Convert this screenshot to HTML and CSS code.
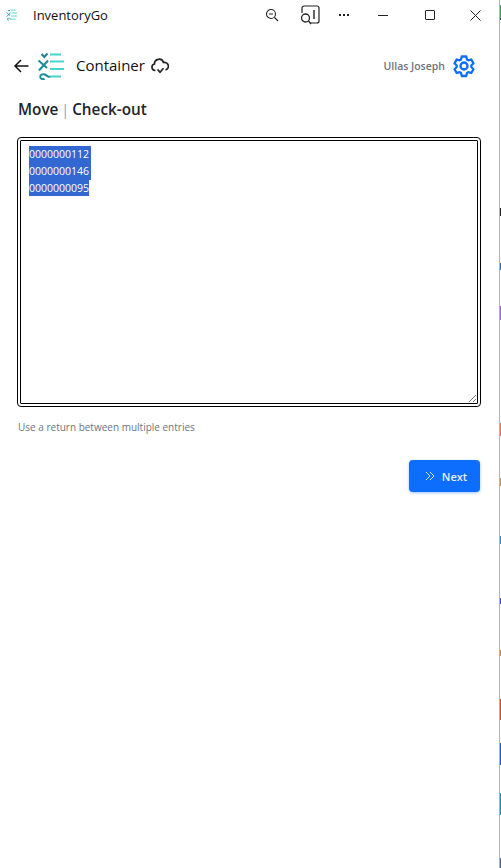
FILE: index.html
```html
<!DOCTYPE html>
<html>
<head>
<title>InventoryGo</title>
<meta name="viewport" content="width=device-width">
<link rel="stylesheet" href="styles.css">
</head>

<body>
<svg class="defs" width="0" height="0">
  <symbol id="logo" viewBox="0 0 27 27">
    <path d="M13 1.500h11M13 8.500h14M13 16h14M13 23.500h11" fill="none" stroke="#45d6cb" stroke-width="2.200"/>
    <path d="M4.500 1l2.800 3L10.500 .5" fill="none" stroke="#1d7f8e" stroke-width="2"/>
    <path d="M1.500 7.500l8.500 7.500M11 7.500l-9 10" fill="none" stroke="#1b8c9c" stroke-width="2"/>
    <path d="M13 23.500c-2 1-3-1-5-2-2.500-1-5 .5-4.800 2.500s2.800 2.800 4.300 1.500" fill="none" stroke="#1b8c9c" stroke-width="2"/>
  </symbol>
</svg>

<div class="window">
  <!-- title bar -->
  <div class="titlebar">
    <svg class="app-icon"><use href="#logo"/></svg>
    <span class="app-name">InventoryGo</span>
    <svg class="tb-zoom" width="14" height="14" viewBox="0 0 14 14">
      <circle cx="6" cy="6" r="4.500" fill="none" stroke="#222" stroke-width="1.100"/>
      <path d="M4 6h4M9.500 9.500L13 13" fill="none" stroke="#222" stroke-width="1.100"/>
    </svg>
    <svg class="tb-reader" width="20" height="20" viewBox="0 0 20 20">
      <path d="M2 8V3a2 2 0 0 1 2-2h13a2 2 0 0 1 2 2v13a2 2 0 0 1-2 2H10" fill="none" stroke="#222" stroke-width="1.200"/>
      <path d="M14 5v9" fill="none" stroke="#222" stroke-width="1.400"/>
      <circle cx="5.500" cy="13" r="4" fill="none" stroke="#222" stroke-width="1.300"/>
      <path d="M8.500 16l2.500 3" fill="none" stroke="#222" stroke-width="1.300"/>
    </svg>
    <span class="tb-dots"><i></i><i></i><i></i></span>
    <span class="tb-min"></span>
    <span class="tb-max"></span>
    <svg class="tb-close" width="11" height="11" viewBox="0 0 11 11">
      <path d="M.5.500l10 10M10.500.500l-10 10" fill="none" stroke="#222" stroke-width="1"/>
    </svg>
  </div>

  <!-- page header -->
  <header class="page-header">
    <svg class="back" width="15" height="14" viewBox="0 0 15 14">
      <path d="M14.500 7H1.500M7 1L1 7l6 6" fill="none" stroke="#111" stroke-width="1.500"/>
    </svg>
    <svg class="logo"><use href="#logo"/></svg>
    <span class="page-name">Container</span>
    <svg class="cloud" width="18" height="16" viewBox="0 0 18 16">
      <path d="M4.500 12.500H4A3.300 3.300 0 0 1 3.500 6 4.600 4.600 0 0 1 12.500 4.500 3.700 3.700 0 0 1 14.500 12" fill="none" stroke="#222" stroke-width="1.700"/>
      <path d="M6.500 11.500l2.500 2.700 3.500-4" fill="none" stroke="#222" stroke-width="1.700"/>
    </svg>
    <span class="user-name">Ullas Joseph</span>
    <svg class="gear" width="24" height="24" viewBox="0 0 24 24">
      <circle cx="12" cy="12" r="3.500" fill="none" stroke="#0d6efd" stroke-width="2.300"/>
      <path d="M9.800 2.500h4.400l.8 3 1.300.8 3-.8 2.200 3.800-2.200 2.200v1.500l2.200 2.200-2.200 3.800-3-.8-1.300.8-.8 3H9.800l-.8-3-1.300-.8-3 .8-2.200-3.800 2.200-2.200v-1.500L2.500 9.300l2.200-3.800 3 .8 1.300-.8z" fill="none" stroke="#0d6efd" stroke-width="2.300" stroke-linejoin="round"/>
    </svg>
  </header>

  <h1 class="crumb">Move <span class="crumb-sep">|</span> Check-out</h1>

  <div class="entries">
    <div class="entry-lines">
      <span class="sel">0000000112</span>
      <span class="sel">0000000146</span>
      <span class="sel last">0000000095</span>
    </div>
    <svg class="grip" width="9" height="9" viewBox="0 0 9 9">
      <path d="M1 8l7-7M5 8l3-3" fill="none" stroke="#777" stroke-width="1"/>
    </svg>
  </div>
  <p class="help">Use a return between multiple entries</p>

  <div class="actions">
    <button type="button" class="next-btn">
      <svg width="10" height="10" viewBox="0 0 10 10">
        <path d="M1 1l4 4-4 4M5 1l4 4-4 4" fill="none" stroke="#cfe2ff" stroke-width="1"/>
      </svg>
      Next
    </button>
  </div>
</div>
<div class="desktop-edge"></div>
</body>
</html>
```

FILE: styles.css
```css
html, body {
  height: 100%;
}

body {
  margin: 0;
  display: flex;
  background: #fff;
  font-family: "Open Sans", "Noto Sans", sans-serif;
  color: #212529;
  overflow: hidden;
}

.defs {
  position: absolute;
}

.window {
  width: 499px;
  flex: none;
}

.desktop-edge {
  width: 2px;
  flex: none;
  border-left: 1px solid #b4b4b4;
  background: linear-gradient(to bottom,
    #fff 0 5px, #3aa655 5px 18px, #10633a 18px 20px, #fff 20px 208px,
    #222 208px 216px, #fff 216px 263px, #2f6db5 263px 270px, #fff 270px 306px,
    #a060d0 306px 320px, #fff 320px 423px, #e8745a 423px 436px, #fff 436px 478px,
    #c89a50 478px 486px, #fff 486px 536px, #2f90d0 536px 544px, #fff 544px 598px,
    #3355cc 598px 604px, #fff 604px 650px, #c8883c 650px 656px, #fff 656px 699px,
    #cf4a1e 699px 720px, #fff 720px 743px, #1560c8 743px 765px, #fff 765px 793px,
    #0e93a5 793px 815px, #fff 815px 858px, #446688 858px 868px);
}

/* title bar */
.titlebar {
  display: flex;
  align-items: center;
  height: 30px;
  padding-left: 6px;
}

.app-icon {
  width: 11px;
  height: 12px;
  flex: none;
}

.app-name {
  margin-left: 16px;
  font-size: 13px;
  color: #111;
}

.tb-zoom {
  margin-left: auto;
}

.tb-reader {
  margin-left: 21px;
}

.tb-dots {
  display: flex;
  gap: 2px;
  margin-left: 19px;
}

.tb-dots i {
  width: 2px;
  height: 2px;
  background: #222;
}

.tb-min {
  width: 10px;
  height: 1px;
  margin-left: 29px;
  background: #222;
}

.tb-max {
  box-sizing: border-box;
  width: 10px;
  height: 10px;
  margin-left: 37px;
  border: 1px solid #222;
  border-radius: 1px;
}

.tb-close {
  margin-left: 35px;
  margin-right: 18px;
}

/* header */
.page-header {
  display: flex;
  align-items: center;
  height: 32px;
  margin-top: 20px;
  padding-left: 14px;
}

.logo {
  width: 27px;
  height: 27px;
  margin-left: 8px;
}

.page-name {
  margin-left: 12px;
  margin-bottom: 2px;
  font-size: 15px;
  color: #111;
}

.cloud {
  margin-left: 6px;
}

.user-name {
  margin-left: auto;
  font-size: 10.500px;
  font-weight: 600;
  color: #6c757d;
}

.gear {
  margin-left: 7px;
  margin-right: 23px;
}

.crumb {
  margin: 16px 0 0 18px;
  font-size: 15.300px;
  line-height: 22px;
  font-weight: 600;
  word-spacing: -1.300px;
  color: #212529;
}

.crumb-sep {
  font-weight: 400;
  color: #8fa6c8;
}

/* entry box */
.entries {
  position: relative;
  box-sizing: border-box;
  width: 464px;
  height: 270px;
  margin: 17px 0 0 17px;
  padding: 5px 8px;
  border: 4px double #000;
  border-radius: 4px;
}

.entry-lines {
  display: flex;
  flex-direction: column;
  align-items: flex-start;
}

.sel {
  width: 62px;
  height: 17px;
  background: #3367d1;
  color: #fff;
  font-size: 10.500px;
  line-height: 17px;
}

.sel.last {
  width: 60px;
  height: 16px;
}

.grip {
  position: absolute;
  right: 0;
  bottom: 0;
}

.help {
  margin: 12px 0 0 18px;
  font-size: 10px;
  line-height: 16px;
  color: #6c757d;
}

.actions {
  display: flex;
  justify-content: flex-end;
  margin: 25px 19px 0 0;
}

.next-btn {
  display: flex;
  align-items: center;
  justify-content: center;
  gap: 7px;
  width: 71px;
  height: 32px;
  padding: 0 0 0 3px;
  border: 0;
  border-radius: 4px;
  background: #0d6efd;
  box-shadow: 0 1px 3px rgba(13,110,253,0.4);
  color: #e4eeff;
  font-family: inherit;
  font-size: 11px;
  font-weight: 600;
}
```
